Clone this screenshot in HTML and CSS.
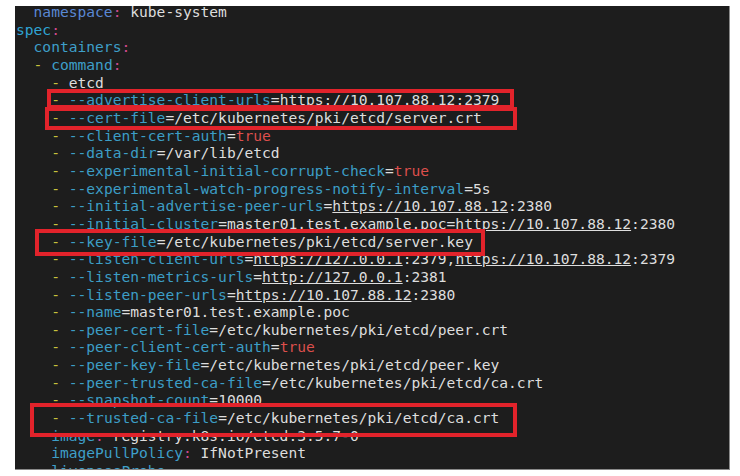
FILE: index.html
```html
<!DOCTYPE html>
<html lang="en">
<head>
  <meta charset="UTF-8">
  <meta name="viewport" content="width=device-width, initial-scale=1.0">
  <title>etcd.yaml</title>
  <link rel="stylesheet" href="styles.css">
</head>
<body>

  <div class="terminal">
<pre class="code">  <span class="ns">namespace</span><span class="c">:</span> kube-system
<span class="sp">spec</span><span class="c">:</span>
  <span class="k">containers</span><span class="c">:</span>
  <span class="d">-</span> <span class="k">command</span><span class="c">:</span>
    <span class="d">-</span> etcd
    <span class="d">-</span> <span class="f">--advertise-client-urls</span>=<span class="u">https://10.107.88.12</span>:2379
    <span class="d">-</span> <span class="f">--cert-file</span>=/etc/kubernetes/pki/etcd/server.crt
    <span class="d">-</span> <span class="f">--client-cert-auth</span>=<span class="t">true</span>
    <span class="d">-</span> <span class="f">--data-dir</span>=/var/lib/etcd
    <span class="d">-</span> <span class="f">--experimental-initial-corrupt-check</span>=<span class="t">true</span>
    <span class="d">-</span> <span class="f">--experimental-watch-progress-notify-interval</span>=5s
    <span class="d">-</span> <span class="f">--initial-advertise-peer-urls</span>=<span class="u">https://10.107.88.12</span>:2380
    <span class="d">-</span> <span class="f">--initial-cluster</span>=master01.test.example.poc=<span class="u">https://10.107.88.12</span>:2380
    <span class="d">-</span> <span class="f">--key-file</span>=/etc/kubernetes/pki/etcd/server.key
    <span class="d">-</span> <span class="f">--listen-client-urls</span>=<span class="u">https://127.0.0.1</span>:2379,<span class="u">https://10.107.88.12</span>:2379
    <span class="d">-</span> <span class="f">--listen-metrics-urls</span>=<span class="u">http://127.0.0.1</span>:2381
    <span class="d">-</span> <span class="f">--listen-peer-urls</span>=<span class="u">https://10.107.88.12</span>:2380
    <span class="d">-</span> <span class="f">--name</span>=master01.test.example.poc
    <span class="d">-</span> <span class="f">--peer-cert-file</span>=/etc/kubernetes/pki/etcd/peer.crt
    <span class="d">-</span> <span class="f">--peer-client-cert-auth</span>=<span class="t">true</span>
    <span class="d">-</span> <span class="f">--peer-key-file</span>=/etc/kubernetes/pki/etcd/peer.key
    <span class="d">-</span> <span class="f">--peer-trusted-ca-file</span>=/etc/kubernetes/pki/etcd/ca.crt
    <span class="d">-</span> <span class="f">--snapshot-count</span>=10000
    <span class="d">-</span> <span class="f">--trusted-ca-file</span>=/etc/kubernetes/pki/etcd/ca.crt
    <span class="k">image</span><span class="c">:</span> registry.k8s.io/etcd:3.5.7-0
    <span class="k">imagePullPolicy</span><span class="c">:</span> IfNotPresent
    <span class="k">livenessProbe</span><span class="c">:</span></pre>

    <!-- highlight boxes -->
    <div class="mark mark-advertise"></div>
    <div class="mark mark-cert"></div>
    <div class="mark mark-key"></div>
    <div class="mark mark-ca"></div>
  </div>

</body>
</html>
```

FILE: styles.css
```css
body {
  margin: 0;
  padding: 0;
  background-color: #ffffff;
}

.terminal {
  position: relative;
  width: 715px;
  height: 464px;
  margin: 6px 0 0 15px;
  background-color: #1d1d1d;
  border-right: 1px solid #8a8a8a;
  border-bottom: 1px solid #8a8a8a;
  box-sizing: border-box;
  overflow: hidden;
}

.code {
  margin: -3px 0 0 1px;
  font-family: 'DejaVu Sans Mono', monospace;
  font-size: 14.6px;
  line-height: 17.65px;
  color: #dedede;
}

.ns { color: #5a88d4; }
.sp { color: #2fa4d4; }
.k { color: #3e9fc9; }
.c { color: #cf4a8e; }
.d { color: #c7c23c; }
.f { color: #3c9ec6; }
.t { color: #dc4f4c; }
.u { text-decoration: underline; }

.mark {
  position: absolute;
  border: 4px solid #e2232b;
  box-sizing: border-box;
}

.mark-advertise {
  left: 32px;
  top: 83px;
  width: 467px;
  height: 20px;
}

.mark-cert {
  left: 30px;
  top: 101px;
  width: 472px;
  height: 23px;
}

.mark-key {
  left: 20px;
  top: 223px;
  width: 450px;
  height: 27px;
}

.mark-ca {
  left: 15px;
  top: 397px;
  width: 487px;
  height: 34px;
}
```
